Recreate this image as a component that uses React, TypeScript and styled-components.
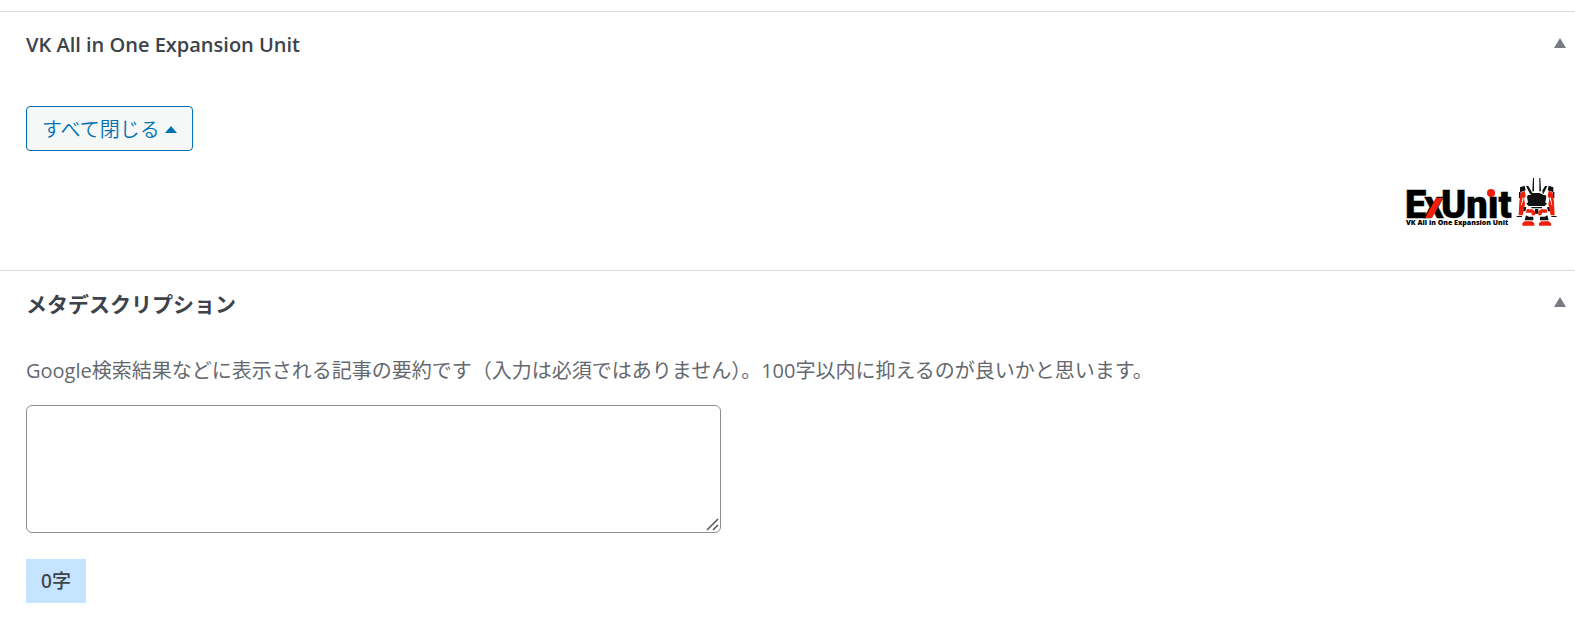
import React, { useState } from 'react';
import styled, { createGlobalStyle } from 'styled-components';

const GlobalStyle = createGlobalStyle`
  *, *::before, *::after { box-sizing: border-box; }
  body {
    margin: 0;
    background: #fff;
    color: #3c434a;
    font-family: "Noto Sans", "Noto Sans CJK JP", sans-serif;
    font-size: 19px;
    line-height: 28px;
  }
`;

const Page = styled.main`
  padding-top: 11px;
`;

const Panel = styled.section`
  border-top: 1px solid #dcdcde;
`;

const PanelHeader = styled.header`
  display: flex;
  align-items: center;
  justify-content: space-between;
  height: 66px;
  padding: 0 9px 0 26px;
`;

const Title = styled.h2<{ $latin?: boolean }>`
  margin: 0;
  font-family: ${(p) => (p.$latin ? '"Open Sans", ' : '')}"Noto Sans", "Noto Sans CJK JP", sans-serif;
  font-size: ${(p) => (p.$latin ? 20 : 21)}px;
  font-weight: ${(p) => (p.$latin ? 600 : 700)};
  line-height: 28px;
`;

const ToggleButton = styled.button`
  display: flex;
  padding: 0 0 4px;
  border: 0;
  background: none;
  color: #787c82;
  cursor: pointer;
`;

const PanelBody = styled.div`
  display: flex;
  flex-direction: column;
  align-items: flex-start;
  padding: 28px 18px 43px 26px;
`;

const CloseAllButton = styled.button`
  display: flex;
  align-items: center;
  gap: 5px;
  height: 45px;
  padding: 0 15px;
  border: 1px solid #0071b1;
  border-radius: 4px;
  background: #f6f7f7;
  color: #0071b1;
  font-family: "Noto Sans CJK JP", sans-serif;
  font-size: 20px;
  font-weight: 350;
  line-height: 28px;
  cursor: pointer;
`;

const LogoRow = styled.div`
  display: flex;
  align-self: flex-end;
  padding-top: 26px;
`;

const FieldBody = styled.div`
  display: flex;
  flex-direction: column;
  align-items: flex-start;
  padding: 20px 26px;
`;

const Description = styled.label`
  color: #646970;
  font-family: "Open Sans", "Noto Sans CJK JP", sans-serif;
  font-size: 20px;
  font-weight: 380;
`;

const TextAreaWrap = styled.div`
  position: relative;
  width: 695px;
  max-width: 100%;
  margin: 20px 0 26px;
`;

const TextArea = styled.textarea`
  display: block;
  width: 100%;
  height: 128px;
  padding: 8px 12px;
  border: 1px solid #8c8f94;
  border-radius: 6px;
  outline: 0;
  background: #fff;
  color: #2c3338;
  font: inherit;
  resize: none;
`;

const Grip = styled.svg`
  position: absolute;
  right: 2px;
  bottom: 2px;
  pointer-events: none;
`;

const Counter = styled.output`
  padding: 8px 15px;
  background: #c5e4ff;
  font-weight: 500;
`;

const UpTriangle = () => (
  <svg width="12" height="10" viewBox="0 0 12 10" aria-hidden="true">
    <path d="M6 0L12 10H0z" fill="currentColor" />
  </svg>
);

const Caret = () => (
  <svg width="12" height="10" viewBox="0 0 12 10" aria-hidden="true">
    <path d="M6 2L12 9H0z" fill="currentColor" />
  </svg>
);

const Logo = () => (
  <svg width="155" height="50" viewBox="-4 0 155 50" role="img" aria-label="ExUnit">
    <g fontFamily="Roboto, sans-serif" fontWeight="900" fontSize="38" stroke="#000" strokeWidth="0.5">
      <text x="-1" y="41">E</text>
      <text x="18" y="41">x</text>
      <text x="35" y="41">Unıt</text>
    </g>
    <text x="0" y="48" fontFamily="Noto Sans, sans-serif" fontWeight="900" fontSize="7">
      VK All in One Expansion Unit
    </text>
    <path d="M30 21h7L26 41h-7z" fill="#f01e0a" />
    <circle cx="85" cy="16" r="4" fill="#f01e0a" />
    <g transform="translate(102 -3) scale(.3333)">
      <path
        fill="#111"
        d="M75 12h3v40h-5zM94 12h3l2 40h-5zM54 36h7l14 24h-9zM118 36h-7L97 60h9zM36 40l14-5 3 14-17 6zM136 40l-14-5-3 14 17 6zM33 54h5v18h-5zM139 54h-5v18h5zM68 50l5 7h26l5-7v14H68zM60 63h52l3 5-3 17 5 4-7 7H62l-7-7 5-4-3-17zM70 99h32v4H70zM81 105h10v14H81zM47 98l8 2-3 12h-7zM125 98l-8 2 3 12h7zM54 124l8 4h14v11H50zM118 124l-8 4H96v11h26zM26 126h16v3H26zM130 126h16v3h-16z"
      />
      <path
        fill="#f01e0a"
        d="M38 56l12-6 3 16-5 8 3 16-7 34H32l2-40zM134 56l-12-6-3 16 5 8-3 16 7 34h12l-2-40zM56 106h16l9 6v12h-9l-2-8H54zM116 106h-16l-9 6v12h9l2-8h16zM50 142h22l7 6v7H43v-7zM122 142h-22l-7 6v7h36v-7z"
      />
      <path fill="#fff" d="M44 70l3 2-6 22h-2zM128 70l-3 2 6 22h2z" />
    </g>
  </svg>
);

export default function App() {
  const [text, setText] = useState('');
  return (
    <>
      <GlobalStyle />
      <Page>
        <Panel>
          <PanelHeader>
            <Title $latin>VK All in One Expansion Unit</Title>
            <ToggleButton type="button" aria-label="VK All in One Expansion Unit">
              <UpTriangle />
            </ToggleButton>
          </PanelHeader>
          <PanelBody>
            <CloseAllButton type="button">
              すべて閉じる
              <Caret />
            </CloseAllButton>
            <LogoRow>
              <Logo />
            </LogoRow>
          </PanelBody>
        </Panel>
        <Panel>
          <PanelHeader>
            <Title>メタデスクリプション</Title>
            <ToggleButton type="button" aria-label="メタデスクリプション">
              <UpTriangle />
            </ToggleButton>
          </PanelHeader>
          <FieldBody>
            <Description htmlFor="meta-description">
              Google検索結果などに表示される記事の要約です（入力は必須ではありません）。100字以内に抑えるのが良いかと思います。
            </Description>
            <TextAreaWrap>
              <TextArea
                id="meta-description"
                value={text}
                onChange={(e) => setText(e.target.value)}
              />
              <Grip width="13" height="13" viewBox="0 0 13 13" aria-hidden="true">
                <path d="M1 12L12 1M7 12L12 7" stroke="#50545a" strokeWidth="1.5" />
              </Grip>
            </TextAreaWrap>
            <Counter htmlFor="meta-description">{text.length}字</Counter>
          </FieldBody>
        </Panel>
      </Page>
    </>
  );
}
